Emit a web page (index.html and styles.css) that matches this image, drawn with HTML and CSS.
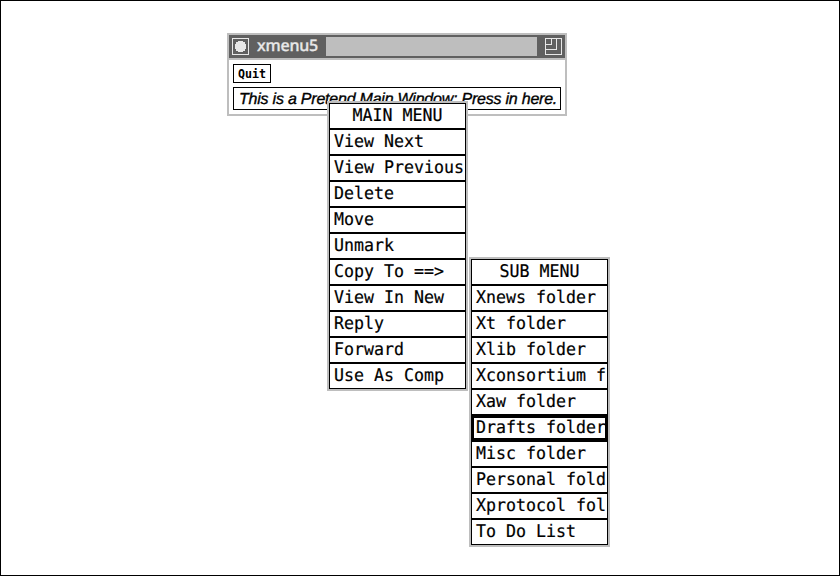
FILE: index.html
```html
<!DOCTYPE html>
<html lang="en">
<head>
<meta charset="utf-8">
<title>xmenu5</title>
<link rel="stylesheet" href="styles.css">
</head>
<body>
<main class="desktop">
  <section class="window">
    <header class="titlebar">
      <svg class="icon" viewBox="0 0 17 17" shape-rendering="crispEdges"><path d="M.5.5h16v16H.5z" fill="none" stroke="#e8e8e8"/><path d="M6 3h5v1h2v2h1v5h-1v2h-2v1H6v-1H4v-2H3V6h1V4h2z" fill="#e8e8e8"/></svg>
      <h1 class="title">xmenu5</h1>
      <div class="grip"></div>
      <svg class="icon" viewBox="0 0 17 17" fill="none" stroke="#e8e8e8" shape-rendering="crispEdges"><path d="M.5.5h16v16H.5zM.5 6.5h6v-6M.5 11.5h11v-11"/></svg>
    </header>
    <div class="content">
      <button class="quit"><span>Quit</span></button>
      <div class="message"><span>This is a Pretend Main Window: Press in here.</span></div>
    </div>
  </section>

  <ul class="menu main-menu">
    <li class="heading"><span>MAIN MENU</span></li>
    <li><span>View Next</span></li>
    <li><span>View Previous</span></li>
    <li><span>Delete</span></li>
    <li><span>Move</span></li>
    <li><span>Unmark</span></li>
    <li><span>Copy To ==&gt;</span></li>
    <li><span>View In New</span></li>
    <li><span>Reply</span></li>
    <li><span>Forward</span></li>
    <li><span>Use As Comp</span></li>
  </ul>

  <ul class="menu sub-menu">
    <li class="heading"><span>SUB MENU</span></li>
    <li><span>Xnews folder</span></li>
    <li><span>Xt folder</span></li>
    <li><span>Xlib folder</span></li>
    <li><span>Xconsortium f</span></li>
    <li><span>Xaw folder</span></li>
    <li class="selected"><span>Drafts folder</span></li>
    <li><span>Misc folder</span></li>
    <li><span>Personal fold</span></li>
    <li><span>Xprotocol fol</span></li>
    <li><span>To Do List</span></li>
  </ul>
</main>
</body>
</html>
```
FILE: styles.css
```css
* { box-sizing: border-box; }

body { margin: 0; background: #fff; color: #000; }

.desktop {
  position: relative;
  width: 840px;
  height: 576px;
  border: 1px solid #000;
  overflow: hidden;
  text-rendering: geometricPrecision;
}

.window {
  position: absolute;
  left: 226px;
  top: 32px;
  width: 340px;
  height: 83px;
  border: 2px solid #bebebe;
  background: #fff;
}

.titlebar {
  display: flex;
  align-items: center;
  height: 25px;
  padding: 0 3px;
  background: #606060;
  border-bottom: 2px solid #bebebe;
}

.icon { display: block; width: 17px; height: 17px; flex: none; }

.title {
  width: 69px;
  margin: 0 0 3px 8px;
  font: 500 16px/20px "Noto Sans", sans-serif;
  letter-spacing: -0.2px;
  -webkit-text-stroke: 0.3px #e8e8e8;
  color: #e8e8e8;
  white-space: nowrap;
}

.grip { width: 211px; height: 19px; margin-right: 8px; background: #bebebe; }

.content { display: flex; flex-direction: column; align-items: flex-start; gap: 4px; padding: 4px; }

.quit {
  width: 38px;
  height: 19px;
  padding: 1px 0 0;
  border: 1px solid #000;
  background: #fff;
  color: #000;
  font: bold 11.63px/16px "DejaVu Sans Mono", monospace;
}

.quit span { display: block; transform: scaleY(1.1); }

.message {
  width: 328px;
  height: 23px;
  padding-left: 5px;
  border: 1px solid #000;
  font: italic 16px/23px "Liberation Sans", sans-serif;
  letter-spacing: -0.22px;
  -webkit-text-stroke: 0.35px #000;
  white-space: nowrap;
}

.menu {
  position: absolute;
  width: 141px;
  margin: 0;
  padding: 0;
  border: 2px solid #bebebe;
  background: #fff;
  list-style: none;
  font: 16.61px/24px "DejaVu Sans Mono", monospace;
  -webkit-text-stroke: 0.2px #000;
}

.main-menu { left: 326px; top: 100px; }
.sub-menu { left: 468px; top: 256px; }

.menu li {
  height: 26px;
  padding-left: 4px;
  border: 1px solid #000;
  overflow: hidden;
  white-space: nowrap;
}

.menu li span { display: block; transform: scaleY(1.05); }
.menu .heading { padding: 0; text-align: center; }
.menu .selected { padding-left: 2px; border-width: 3px; line-height: 20px; }
```
